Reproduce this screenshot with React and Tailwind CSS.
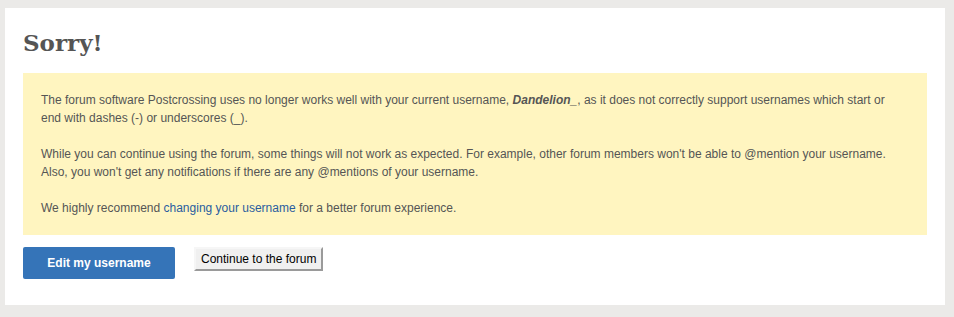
export default function App() {
  return (
    <div className="min-h-[317px] bg-[#ebeae8] pl-[5px] pr-[9px] pt-[8px] pb-[12px] font-['Liberation_Sans',Arial,sans-serif]">
      <div className="bg-white px-[18px] pt-[17px] pb-[26px]">
        <h1 className="font-['DejaVu_Serif',Georgia,serif] text-[23px] leading-[36px] font-bold text-[#555555]">
          Sorry!
        </h1>

        <div className="mt-[12px] bg-[#fff5c0] pl-[18px] pr-[22px] py-[18px] text-[12px] leading-[18px] text-[#555555]">
          <p>
            The forum software Postcrossing uses no longer works well with your current username,{" "}
            <strong className="italic font-bold">Dandelion_</strong>, as it does not correctly support usernames which
            start or end with dashes (-) or underscores (_).
          </p>
          <p className="mt-[18px]">
            While you can continue using the forum, some things will not work as expected. For example, other forum
            members won't be able to @mention your username. Also, you won't get any notifications if there are any
            @mentions of your username.
          </p>
          <p className="mt-[18px]">
            We highly recommend{" "}
            <a href="#" className="text-[#2a5d9f]">
              changing your username
            </a>{" "}
            for a better forum experience.
          </p>
        </div>

        <div className="mt-[12px] flex items-start gap-[19px]">
          <button className="h-[32px] w-[152px] rounded-[2px] bg-[#3574b8] text-[12px] font-bold text-white">
            Edit my username
          </button>
          <button className="h-[24px] border-2 border-t-[#f6f6f6] border-l-[#f6f6f6] border-r-[#9a9a9a] border-b-[#9a9a9a] bg-[#f0f0f0] px-[5px] text-[12px] text-black">
            Continue to the forum
          </button>
        </div>
      </div>
    </div>
  );
}
